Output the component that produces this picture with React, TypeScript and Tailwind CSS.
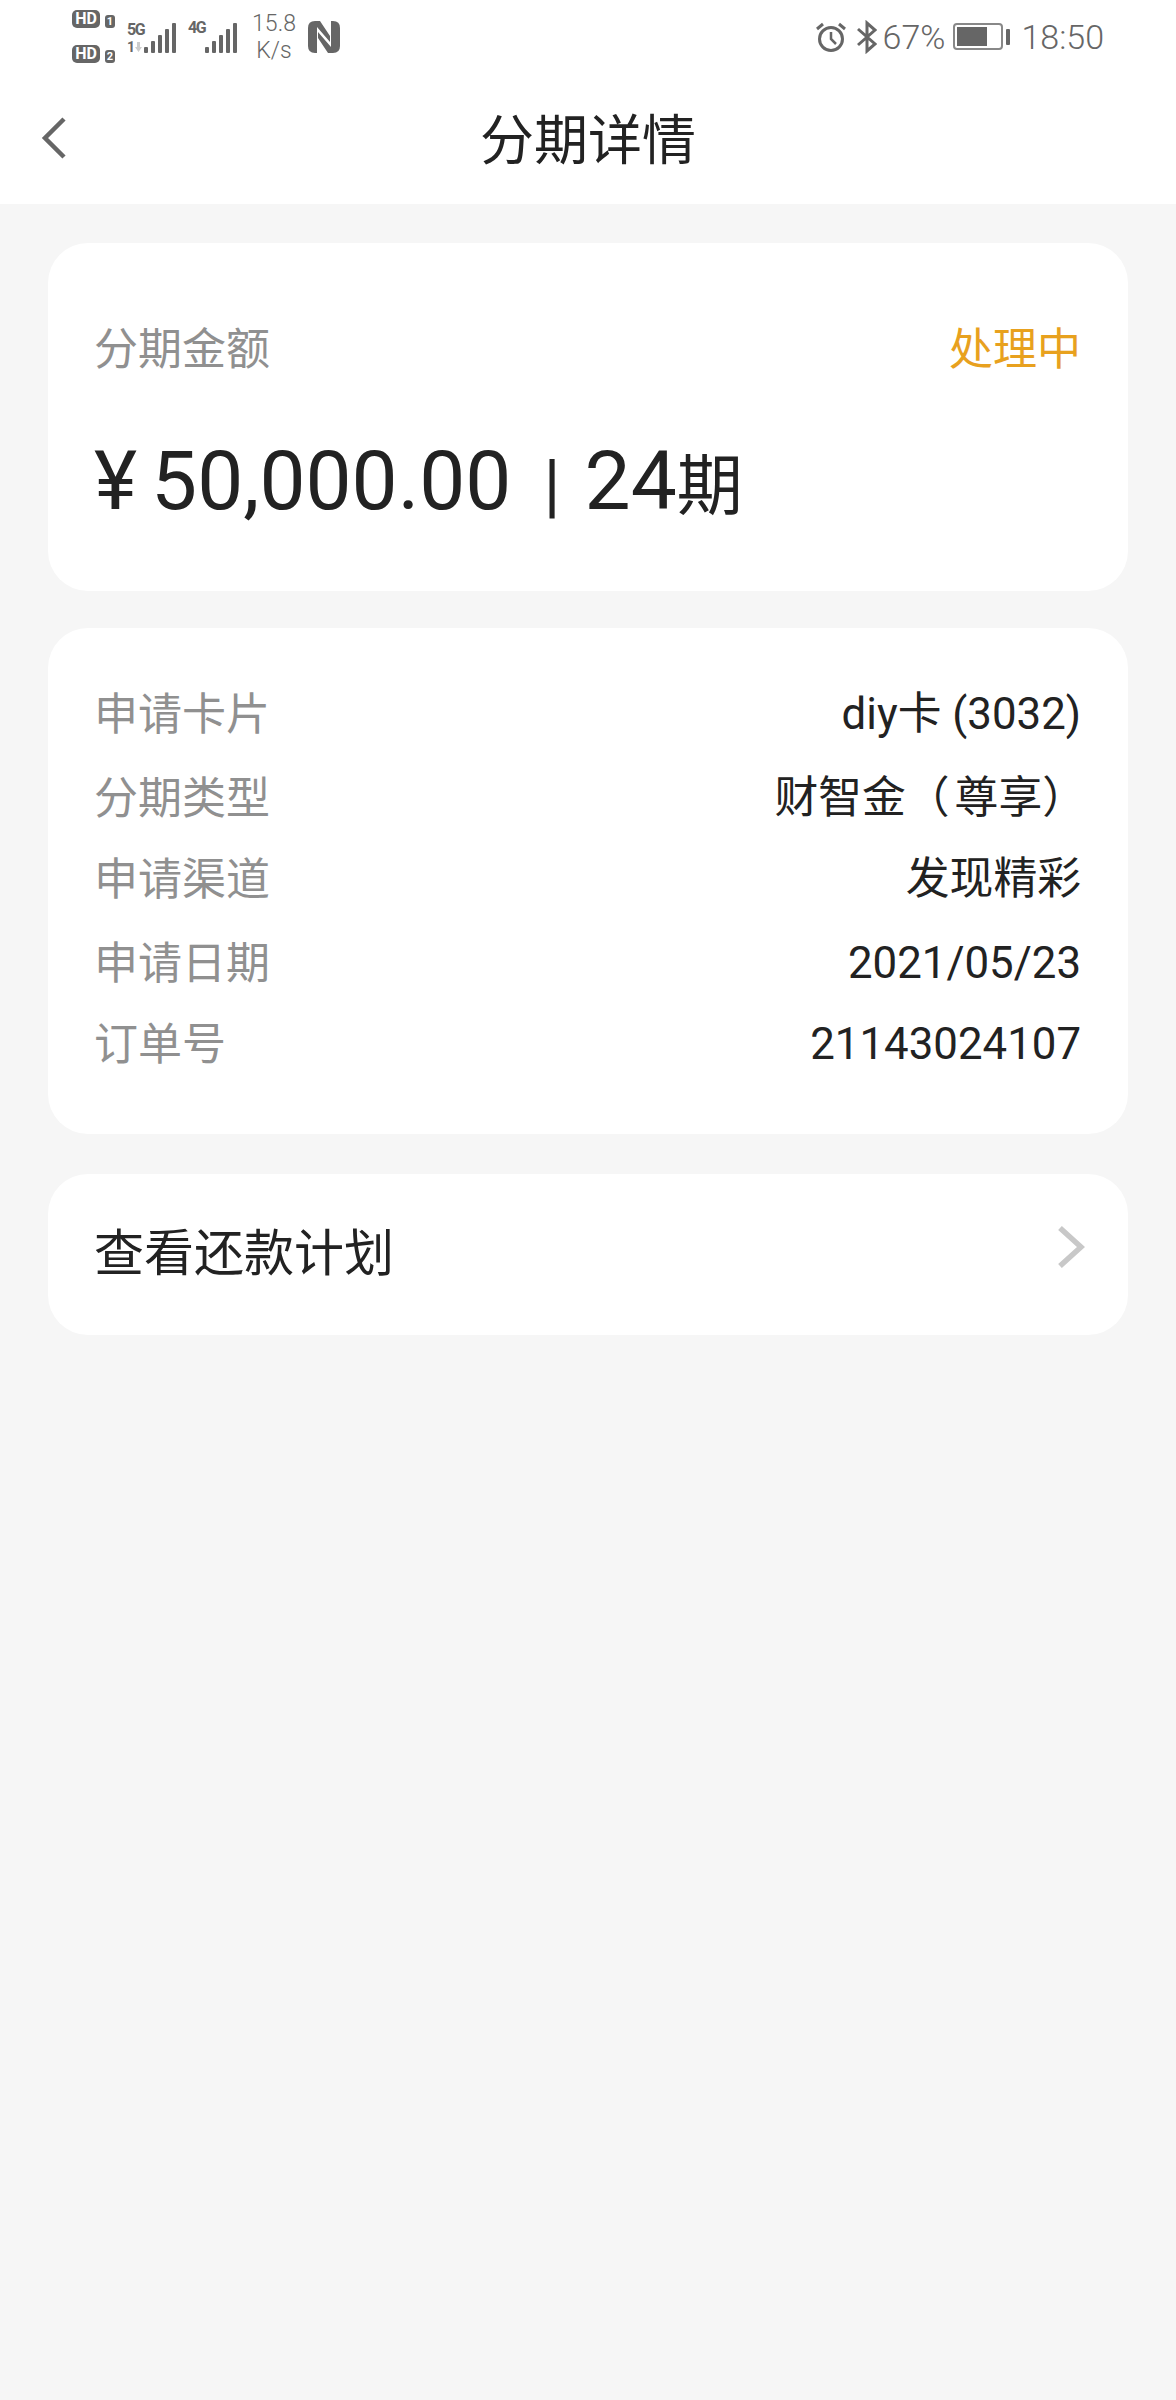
import React from "react";

const cjk = "font-['Roboto','Noto_Sans_CJK_SC',sans-serif]";

function Bars() {
  const heights = [6, 12, 18, 24, 30];
  return (
    <div className="flex items-end gap-[3px]">
      {heights.map((h, i) => (
        <div key={i} className="w-[4px] rounded-[1px] bg-[#666]" style={{ height: h }} />
      ))}
    </div>
  );
}

function Hd({ n }: { n: string }) {
  return (
    <div className="flex items-end gap-[5px]">
      <div className="flex h-[18px] w-[28px] items-center justify-center rounded-[5px] bg-[#666] text-[16px] leading-none font-bold text-white">HD</div>
      <div className="flex h-[13px] w-[10px] items-center justify-center rounded-[3px] bg-[#666] text-[11px] leading-none font-bold text-white">{n}</div>
    </div>
  );
}

function StatusBar() {
  return (
    <div className="flex h-[70px] items-center justify-between bg-white pt-[3px] pr-[72px] pl-[72px] text-[#666]">
      <div className="flex items-center">
        <div className="flex flex-col gap-[17px]">
          <Hd n="1" />
          <Hd n="2" />
        </div>
        <div className="ml-[12px] flex h-[32px] items-end">
          <div className="flex w-[17px] flex-col text-[16px] leading-[14px] font-bold tracking-[-1.5px]">
            <span>5G</span>
            <div className="mt-[5px] flex items-center gap-[1px]">
              <span className="text-[14px] leading-[11px]">1</span>
              <svg width="7" height="10" viewBox="0 0 7 10"><path d="M2 0 H5 V5 H7 L3.5 10 L0 5 H2 Z" fill="#ccc" /></svg>
            </div>
          </div>
          <Bars />
        </div>
        <div className="ml-[12px] flex h-[32px] items-end">
          <div className="w-[17px] self-start text-[16px] leading-[14px] font-bold tracking-[-1.5px]">4G</div>
          <Bars />
        </div>
        <div className="ml-[15px] flex w-[44px] flex-col items-center text-[23px] leading-[27px] font-light text-[#666]">
          <span>15.8</span>
          <span>K/s</span>
        </div>
        <svg className="ml-[12px]" width="32" height="32" viewBox="0 0 32 32" fill="#666">
          <path d="M7 0 H12 L22 15 V21 L9 6 V32 H7 Q0 32 0 25 V7 Q0 0 7 0 Z" />
          <path d="M7 0 H12 L22 15 V21 L9 6 V32 H7 Q0 32 0 25 V7 Q0 0 7 0 Z" transform="rotate(180 16 16)" />
        </svg>
      </div>
      <div className="flex items-center">
        <svg width="32" height="32" viewBox="0 0 32 32" fill="none" stroke="#666">
          <circle cx="16" cy="18" r="11.5" strokeWidth="3" />
          <path d="M16 11 V18 L21 23" strokeWidth="2.5" />
          <path d="M2 8 L8 3 M30 8 L24 3" strokeWidth="3" />
        </svg>
        <svg className="ml-[10px]" width="20" height="34" viewBox="0 0 20 34" fill="none" stroke="#666" strokeWidth="3">
          <path d="M1 9 L18 24 L10 31 V3 L18 10 L1 25" />
        </svg>
        <span className="ml-[6px] text-[34px] leading-none font-light">67%</span>
        <div className="ml-[8px] flex items-center gap-[3px]">
          <div className="flex h-[27px] w-[50px] items-center rounded-[4px] border-2 border-[#888] p-[2px]">
            <div className="h-full w-[30px] bg-[#666]" />
          </div>
          <div className="h-[16px] w-[4px] rounded-[1px] bg-[#666]" />
        </div>
        <span className="ml-[11px] text-[34px] leading-none font-light">18:50</span>
      </div>
    </div>
  );
}

const rows: { k: string; v: React.ReactNode; cls: string }[] = [
  { k: "申请卡片", v: "diy卡 (3032)", cls: "" },
  {
    k: "分期类型",
    v: (
      <>
        财智金<span className="mr-[5px]">（</span>尊享<span className="-mr-[5px]">）</span>
      </>
    ),
    cls: "mt-[24px]",
  },
  { k: "申请渠道", v: "发现精彩", cls: "mt-[21px]" },
  { k: "申请日期", v: "2021/05/23", cls: "mt-[24px]" },
  { k: "订单号", v: "21143024107", cls: "mt-[21px]" },
];

export default function App() {
  return (
    <div className={`min-h-[2400px] bg-[#f6f6f6] ${cjk}`}>
      <StatusBar />
      <header className="relative flex h-[134px] items-center justify-center bg-white pt-[9px]">
        <svg className="absolute top-[46px] left-[40px]" width="28" height="44" viewBox="0 0 28 44" fill="none" stroke="#666" strokeWidth="4.5">
          <path d="M24 3 L5 22 L24 41" />
        </svg>
        <h1 className="text-[54px] leading-none font-normal text-[#222]">分期详情</h1>
      </header>
      <main className="flex flex-col px-[48px] pt-[39px]">
        <section className="flex h-[348px] flex-col rounded-[40px] bg-white pt-[79px] pr-[47px] pl-[46px]">
          <div className="flex items-center justify-between text-[44px] leading-[56px]">
            <span className="text-[#909090]">分期金额</span>
            <span className="text-[#e8a11e]">处理中</span>
          </div>
          <div className="mt-[62px] flex items-baseline leading-none text-[#222]">
            <span className="text-[82px]">¥</span>
            <span className="ml-[14px] text-[82px]">50,000.00</span>
            <span className="ml-[32px] text-[70px]">|</span>
            <span className="ml-[24px] text-[82px]">24</span>
            <span className="text-[66px]">期</span>
          </div>
        </section>
        <section className="mt-[37px] flex h-[506px] flex-col rounded-[40px] bg-white pt-[57px] pr-[47px] pl-[46px]">
          {rows.map(({ k, v, cls }) => (
            <div key={k} className={`flex h-[60px] items-center justify-between text-[44px] ${cls}`}>
              <span className="whitespace-nowrap text-[#909090]">{k}</span>
              <span className="whitespace-nowrap text-[43.8px] text-[#222]">{v}</span>
            </div>
          ))}
        </section>
        <section className="mt-[40px] flex h-[161px] items-center justify-between rounded-[40px] bg-white pr-[43px] pl-[46px]">
          <span className="text-[50px] text-[#222]">查看还款计划</span>
          <svg className="mb-[16px]" width="28" height="44" viewBox="0 0 28 44" fill="none" stroke="#c8c8c8" strokeWidth="5.5">
            <path d="M3 3 L24 22 L3 41" />
          </svg>
        </section>
      </main>
    </div>
  );
}
